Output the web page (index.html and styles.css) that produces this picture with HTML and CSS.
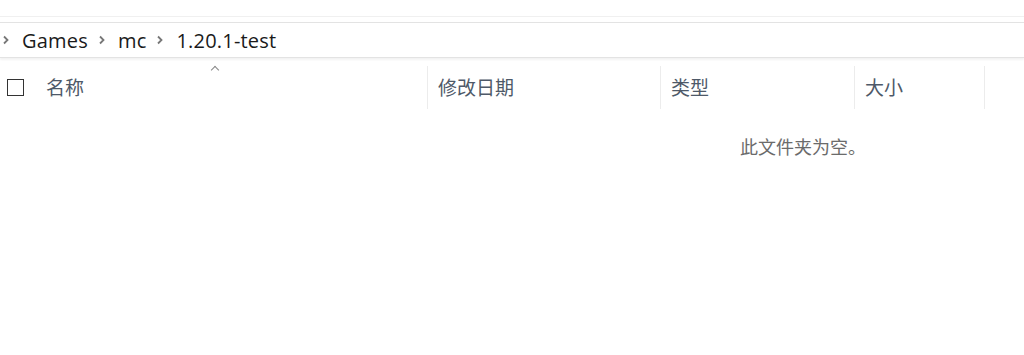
FILE: index.html
```html
<!DOCTYPE html>
<html>
<head>
    <title>1.20.1-test</title>
    <link rel="stylesheet" href="styles.css">
</head>
<body>
    <div id="toolbar"></div>
    <div id="crumbs">
        <svg class="chev first" width="6" height="10" viewBox="0 0 6 10"><path d="M1 1.5 L4.5 5 L1 8.5" fill="none" stroke="#777" stroke-width="1.8"/></svg>
        <span class="crumb">Games</span>
        <svg class="chev" width="6" height="10" viewBox="0 0 6 10"><path d="M1 1.5 L4.5 5 L1 8.5" fill="none" stroke="#777" stroke-width="1.8"/></svg>
        <span class="crumb">mc</span>
        <svg class="chev" width="6" height="10" viewBox="0 0 6 10"><path d="M1 1.5 L4.5 5 L1 8.5" fill="none" stroke="#777" stroke-width="1.8"/></svg>
        <span class="crumb">1.20.1-test</span>
    </div>
    <div id="listHead">
        <div class="col colCheck"><span id="checkBox"></span></div>
        <div class="col colName">名称<span id="sortCaret"></span></div>
        <div class="col colDate">修改日期</div>
        <div class="col colType">类型</div>
        <div class="col colSize">大小</div>
    </div>
    <div id="emptyMsg">此文件夹为空。</div>
</body>
</html>
```

FILE: styles.css
```css
body{
    margin: 0px;
    background-color: #ffffff;
    font-family: "Open Sans", "Noto Sans CJK SC", sans-serif;
}

#toolbar{
    height: 16px;
    border-bottom: 1px solid #f0f0f0;
    margin-bottom: 5px;
}

#crumbs{
    display: flex;
    align-items: center;
    height: 34px;
    border-top: 1px solid #e3e3e3;
    border-bottom: 1px solid #e3e3e3;
    box-shadow: 0px 2px 2px #f3f3f3;
    color: #1a1a1a;
    font-size: 20px;
    letter-spacing: 0.2px;
}

.chev{
    margin-left: 11px;
    margin-right: 13px;
}

.chev.first{
    margin-left: 3px;
}

#listHead{
    display: flex;
    margin-top: 8px;
    height: 43px;
    font-family: "Noto Sans CJK SC", sans-serif;
    font-size: 19px;
    color: #4e5968;
}

.col{
    display: flex;
    align-items: center;
    box-sizing: border-box;
    border-right: 1px solid #ececec;
    padding-left: 10px;
    padding-bottom: 3px;
    position: relative;
}

.colCheck{
    width: 36px;
    padding-left: 7px;
    padding-bottom: 0px;
    border-right: none;
}

.colName{
    width: 392px;
}

.colDate{
    width: 233px;
}

.colType{
    width: 194px;
}

.colSize{
    width: 130px;
}

#checkBox{
    width: 15px;
    height: 15px;
    border: 1.5px solid #333333;
}

#sortCaret{
    position: absolute;
    left: 176px;
    top: 1px;
    width: 5px;
    height: 5px;
    border-left: 1px solid #888888;
    border-top: 1px solid #888888;
    transform: rotate(45deg);
}

#emptyMsg{
    margin-top: 24px;
    padding-left: 740px;
    font-family: "Noto Sans CJK SC", sans-serif;
    font-size: 18px;
    color: #6b6b6b;
}
```
